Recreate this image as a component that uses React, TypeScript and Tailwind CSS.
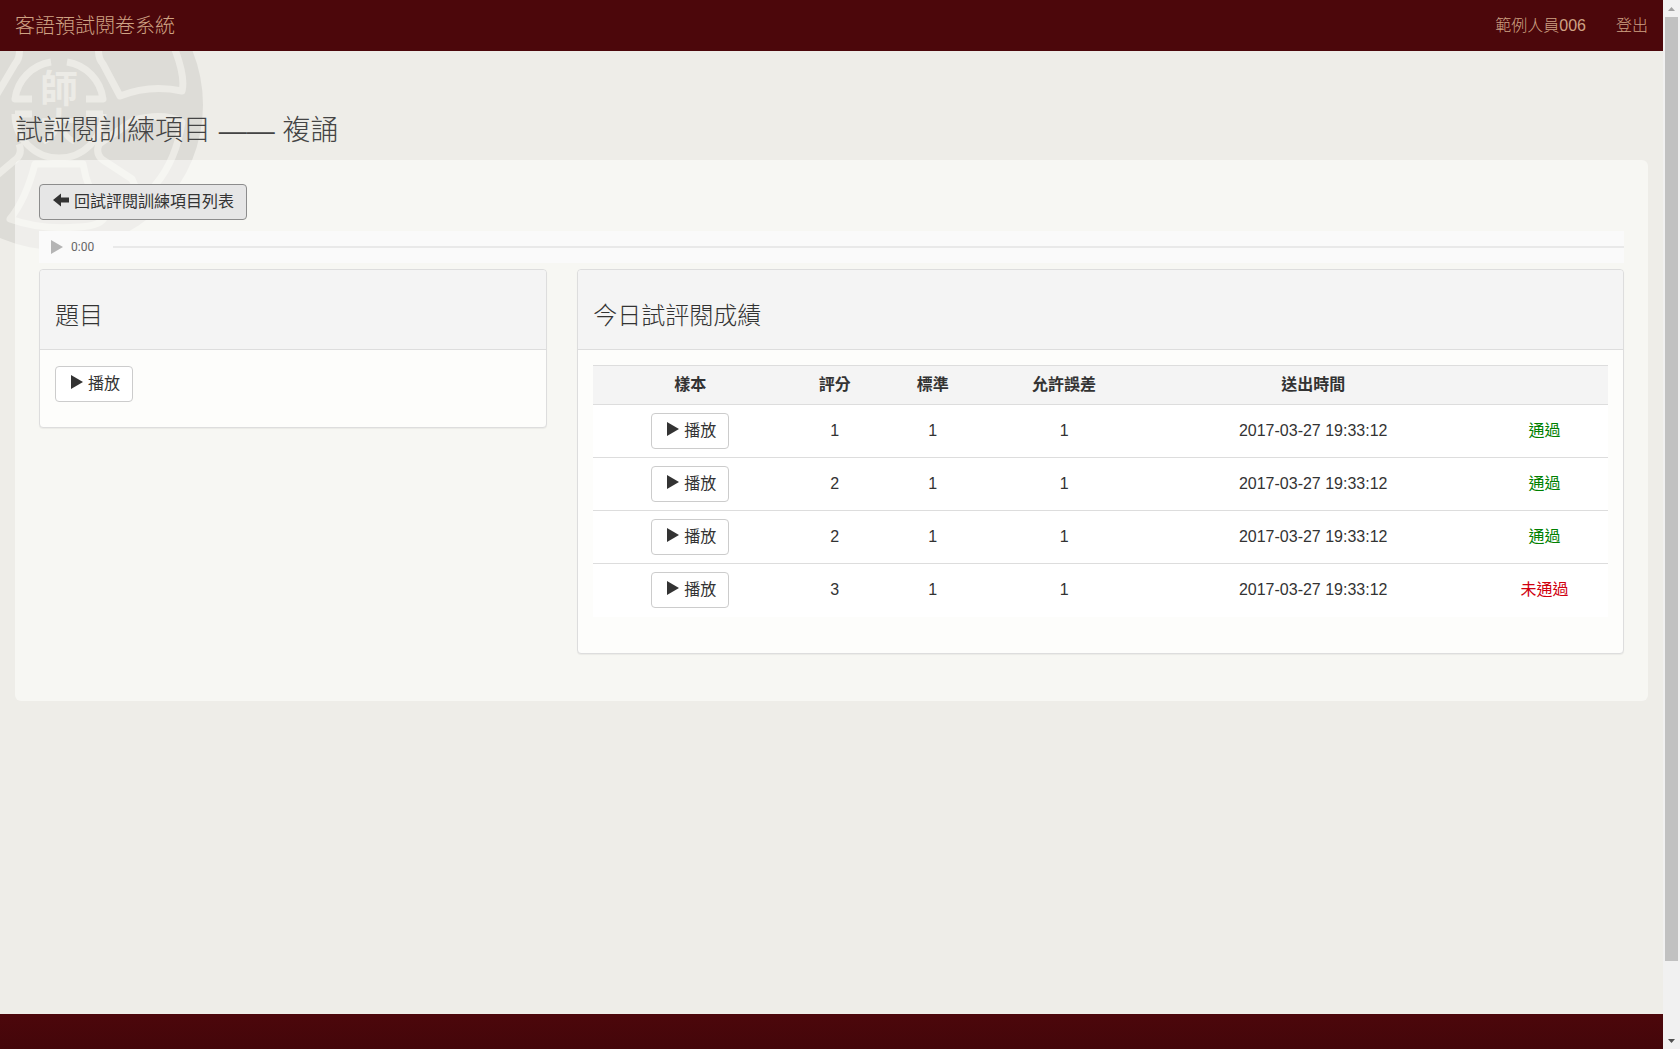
import type { ReactNode } from "react";

type Result = {
  score: number;
  standard: number;
  tolerance: number;
  sentAt: string;
  passed: boolean;
};

const results: Result[] = [
  { score: 1, standard: 1, tolerance: 1, sentAt: "2017-03-27 19:33:12", passed: true },
  { score: 2, standard: 1, tolerance: 1, sentAt: "2017-03-27 19:33:12", passed: true },
  { score: 2, standard: 1, tolerance: 1, sentAt: "2017-03-27 19:33:12", passed: true },
  { score: 3, standard: 1, tolerance: 1, sentAt: "2017-03-27 19:33:12", passed: false },
];

function Emblem() {
  return (
    <svg
      className="pointer-events-none absolute left-0 top-0"
      width="210"
      height="204"
      viewBox="0 51 210 204"
      fill="none"
      stroke="#ecebe6"
      strokeWidth="7"
      strokeLinejoin="round"
      aria-hidden="true"
    >
      <circle cx="58" cy="105" r="145" fill="#dddcd7" stroke="none" />
      {/* inner ring */}
      <path d="M51 62A43 43 0 0 0 15 99H32M67 62A43 43 0 0 1 103 99H86M15 114H32M103 114H86M15 114A44 44 0 0 0 103 114" />
      {/* petals */}
      <path d="M100 42Q96 56 103 64L120 96Q150 84 182 91Q186 76 172 42" />
      <path d="M18 42Q22 56 15 64L-4 96" />
      <path d="M99 144Q95 154 103 160L132 179Q142 206 156 184Q176 160 182 122Q164 112 134 120Z" />
      <path d="M19 144Q23 154 15 160L-4 176" />
      <path d="M35 164H83Q87 190 105 216Q102 226 78 227Q40 230 10 219Q26 199 35 164Z" />
      <g
        fill="#ecebe6"
        stroke="none"
        fontSize="38"
        fontWeight="700"
        textAnchor="middle"
        fontFamily="Noto Sans CJK TC, sans-serif"
      >
        <text x="59" y="102">師</text>
        <text x="59" y="140">大</text>
      </g>
    </svg>
  );
}

function PlayButton() {
  return (
    <button
      type="button"
      className="inline-flex h-9 items-center gap-1 rounded border border-[#cccccc] bg-white px-3 text-base leading-6 text-[#333333]"
    >
      <svg className="mb-1 ml-0.5" width="14" height="14" viewBox="0 0 14 14" fill="#333333" aria-hidden="true">
        <path d="M1 0L13 7L1 14Z" />
      </svg>
      播放
    </button>
  );
}

function Panel({ title, children }: { title: string; children: ReactNode }) {
  return (
    <section className="rounded border border-[#dddddd] bg-[#fdfdfb] shadow-[0_1px_1px_rgba(0,0,0,0.05)]">
      <header className="rounded-t border-b border-[#dddddd] bg-[#f4f4f4] px-[15px] pb-[15px] pt-7">
        <h3 className="text-2xl font-light leading-9 text-[#333333]">{title}</h3>
      </header>
      {children}
    </section>
  );
}

function AudioBar() {
  return (
    <div className="mt-[11px] flex h-8 items-center bg-[#fafafa] pl-3">
      <button type="button" aria-label="播放音訊" className="mr-2">
        <svg width="12" height="14" viewBox="0 0 12 14" fill="#b4b4b4" aria-hidden="true">
          <path d="M0 0L12 7L0 14Z" />
        </svg>
      </button>
      <span className="w-[42px] font-[Roboto,sans-serif] text-xs text-[#666666]">0:00</span>
      <input
        type="range"
        aria-label="播放進度"
        defaultValue={0}
        className="h-0.5 min-w-0 flex-1 appearance-none bg-[#e9e9e9] [&::-webkit-slider-thumb]:appearance-none"
      />
    </div>
  );
}

function ResultsTable() {
  return (
    <table className="w-full table-fixed text-center text-base leading-6 text-[#333333]">
      <colgroup>
        <col className="w-[19.1%]" />
        <col className="w-[9.4%]" />
        <col className="w-[9.9%]" />
        <col className="w-[16%]" />
        <col className="w-[33.1%]" />
        <col className="w-[12.5%]" />
      </colgroup>
      <thead>
        <tr className="h-[39px] border-y border-[#dddddd] bg-[#f4f4f4] font-bold">
          <th scope="col">樣本</th>
          <th scope="col">評分</th>
          <th scope="col">標準</th>
          <th scope="col">允許誤差</th>
          <th scope="col">送出時間</th>
          <td></td>
        </tr>
      </thead>
      <tbody className="divide-y divide-[#dddddd] bg-white">
        {results.map((result, index) => (
          <tr key={index} className="h-[53px]">
            <td>
              <PlayButton />
            </td>
            <td>{result.score}</td>
            <td>{result.standard}</td>
            <td>{result.tolerance}</td>
            <td>{result.sentAt}</td>
            <td className={result.passed ? "text-[#008000]" : "text-[#d00010]"}>
              {result.passed ? "通過" : "未通過"}
            </td>
          </tr>
        ))}
      </tbody>
    </table>
  );
}

function ScrollRail() {
  return (
    <div className="flex w-[17px] shrink-0 flex-col items-center bg-[#f1f1f1]" aria-hidden="true">
      <svg width="17" height="17" viewBox="0 0 17 17" fill="#a3a3a3">
        <path d="M5 11L8.500 7L12 11Z" />
      </svg>
      <div className="w-[13px] grow-[93] bg-[#c1c1c1]" />
      <div className="grow-[7]" />
      <svg width="17" height="17" viewBox="0 0 17 17" fill="#505050">
        <path d="M5 7L8.500 11L12 7Z" />
      </svg>
    </div>
  );
}

export default function App() {
  return (
    <div className="flex min-h-screen bg-[#eeede8] font-['Liberation_Sans','Noto_Sans_CJK_TC',sans-serif]">
      <div className="flex min-w-0 flex-1 flex-col">
        <nav className="flex h-[51px] items-center justify-between bg-[#4c070b] px-[15px] text-[#cfa283]">
          <a href="#home" className="text-xl font-light">
            客語預試閱卷系統
          </a>
          <div className="flex gap-[30px] text-base font-light">
            <a href="#user">範例人員006</a>
            <a href="#logout">登出</a>
          </div>
        </nav>
        <div className="relative flex-1">
          <Emblem />
          <main className="relative px-[15px] pt-[62px]">
            <h1 className="pb-[11px] text-[28px] font-light leading-9 text-[#444444]">
              試評閱訓練項目 —— 複誦
            </h1>
            <div className="rounded-md bg-[rgba(255,255,253,0.53)] px-6 pb-[47px] pt-6">
              <button
                type="button"
                className="flex h-9 items-center gap-1 rounded border border-[#8c8c8c] bg-[#e6e6e6] px-3 text-base text-[#333333]"
              >
                <svg className="mb-1" width="18" height="14" viewBox="0 0 18 14" fill="#333333" aria-hidden="true">
                  <path d="M1 7L9 0.500V4.500H17V9.500H9V13.500Z" />
                </svg>
                回試評閱訓練項目列表
              </button>
              <AudioBar />
              <div className="mt-1.5 grid grid-cols-3 items-start gap-[30px]">
                <Panel title="題目">
                  <div className="px-[15px] pb-[25px] pt-4">
                    <PlayButton />
                  </div>
                </Panel>
                <div className="col-span-2">
                  <Panel title="今日試評閱成績">
                    <div className="px-[15px] pb-9 pt-[15px]">
                      <ResultsTable />
                    </div>
                  </Panel>
                </div>
              </div>
            </div>
          </main>
        </div>
        <footer className="h-[35px] bg-gradient-to-b from-[#4c070b] to-[#44060a]" />
      </div>
      <ScrollRail />
    </div>
  );
}
